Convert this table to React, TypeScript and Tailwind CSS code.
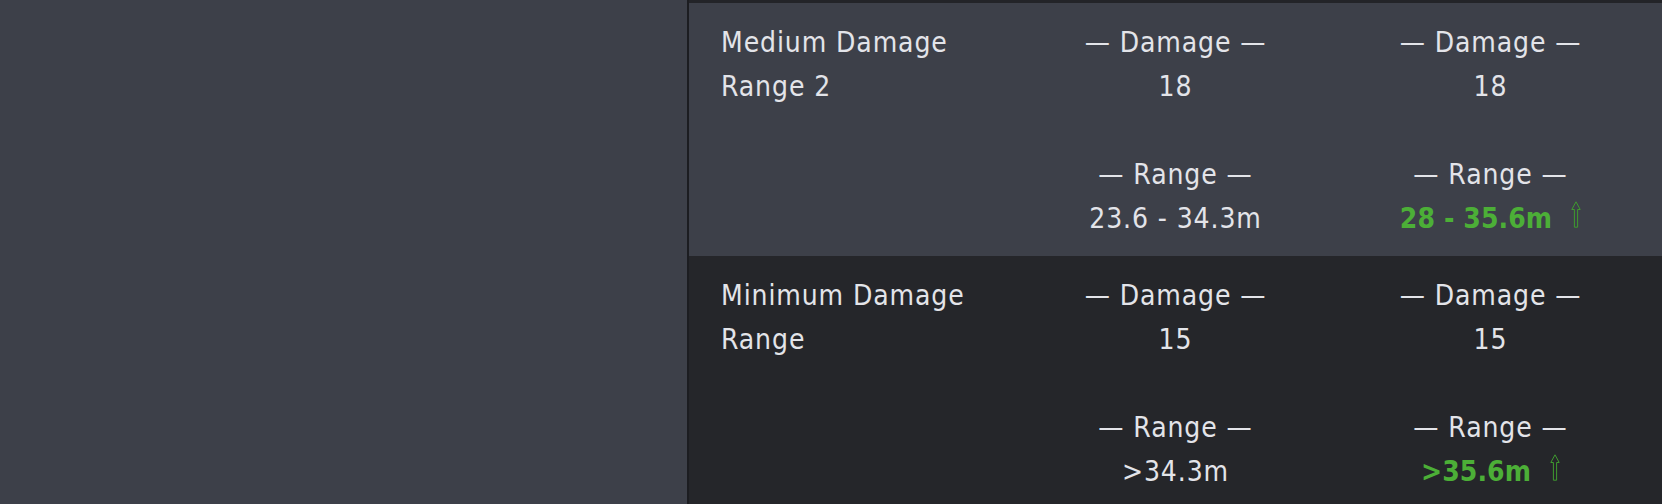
import React from "react";

type Stat = {
  title: string[];
  damage: [string, string];
  range: [string, string];
};

const rows: Stat[] = [
  { title: ["Medium Damage", "Range 2"], damage: ["18", "18"], range: ["23.6 - 34.3m", "28 - 35.6m"] },
  { title: ["Minimum Damage", "Range"], damage: ["15", "15"], range: [">34.3m", ">35.6m"] },
];

function UpArrow() {
  return (
    <svg width="10" height="27" viewBox="0 0 10 27" className="ml-[19px] mb-[-2px] shrink-0">
      <path d="M5 0.8 L9.2 8.5 H6.6 V26.2 H3.4 V8.5 H0.8 Z" fill="none" stroke="#3f9a2f" strokeWidth="1" />
    </svg>
  );
}

function StatCell({ damage, range, better }: { damage: string; range: string; better?: boolean }) {
  return (
    <div className="flex flex-col items-center">
      <div>— Damage —</div>
      <div>{damage}</div>
      <div className="mt-[44px]">— Range —</div>
      {better ? (
        <div className="flex items-baseline">
          <span className="font-bold tracking-[0.1px] text-[#4caf37]">{range}</span>
          <UpArrow />
        </div>
      ) : (
        <div>{range}</div>
      )}
    </div>
  );
}

export default function App() {
  return (
    <div
      className="flex w-[1662px] h-[504px] overflow-hidden bg-[#3d4049] text-[#e3e4e9] text-[28px] leading-[44px] tracking-[0.9px]"
      style={{ fontFamily: '"Liberation Sans Narrow", "DejaVu Sans Condensed", Roboto, sans-serif' }}
    >
      <div className="w-[689px] shrink-0 border-r-2 border-[#1c1d21]" />
      <div className="flex-1 flex flex-col border-t-[3px] border-[#232428]">
        {rows.map((row, i) => (
          <div
            key={i}
            className={`grid grid-cols-[297px_315px_315px] pl-8 pt-[18px] pb-4 h-[253px] shrink-0 ${
              i === 0 ? "bg-[#3d4049]" : "bg-[#25262a]"
            }`}
          >
            <div className="flex flex-col">
              {row.title.map((t) => (
                <div key={t} className="whitespace-nowrap">{t}</div>
              ))}
            </div>
            <StatCell damage={row.damage[0]} range={row.range[0]} />
            <StatCell damage={row.damage[1]} range={row.range[1]} better />
          </div>
        ))}
      </div>
    </div>
  );
}
